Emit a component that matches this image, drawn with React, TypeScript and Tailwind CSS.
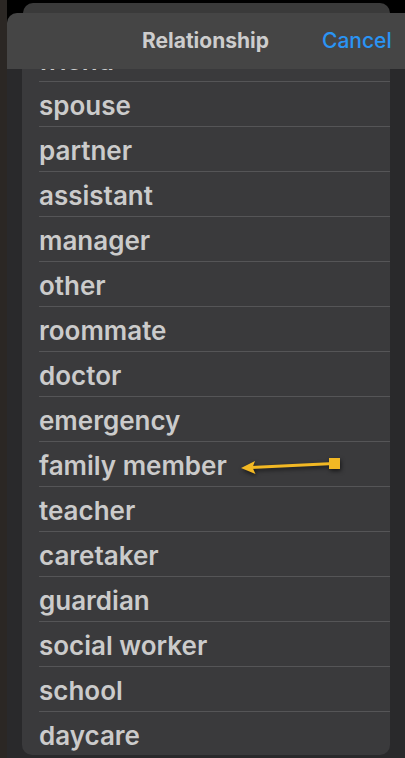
import React from 'react';

const items = [
  'friend',
  'spouse',
  'partner',
  'assistant',
  'manager',
  'other',
  'roommate',
  'doctor',
  'emergency',
  'family member',
  'teacher',
  'caretaker',
  'guardian',
  'social worker',
  'school',
  'daycare',
];

function Arrow() {
  return (
    <svg
      className="absolute left-[200px] top-[11px] drop-shadow-[1px_2px_2px_rgba(0,0,0,0.6)]"
      width="106"
      height="22"
      viewBox="0 0 106 22"
    >
      <line x1="12" y1="14.5" x2="95" y2="10.5" stroke="#f2b824" strokeWidth="3" />
      <path d="M2 15 L16 8 L13.5 14.6 L16.5 21 Z" fill="#f2b824" />
      <rect x="90" y="5" width="11" height="11" fill="#f2b824" />
    </svg>
  );
}

export default function App() {
  return (
    <div
      className="flex h-[758px] w-[405px] overflow-hidden bg-black"
      style={{ fontFamily: 'Inter, "Liberation Sans", sans-serif' }}
    >
      <div className="w-[7px] shrink-0 bg-[#2b2724]" />
      <div className="flex min-w-0 flex-1 flex-col">
        <div className="h-[13px] shrink-0 pl-[16px] pr-[15px] pt-[3px]">
          <div className="h-full rounded-t-[10px] bg-[#3a3a3a]" />
        </div>
        <div className="flex h-[56px] shrink-0 items-center rounded-tl-[10px] bg-[#454545]">
          <div className="flex-1 pl-[82px] text-center text-[21px] font-bold text-[#cdcdcd]">
            Relationship
          </div>
          <div className="w-[83px] text-[21px] font-medium text-[#2a94f4]">Cancel</div>
        </div>
        <div className="flex min-h-0 flex-1 bg-[#29292b] pb-[3px] pl-[15px] pr-[15px]">
          <div className="flex-1 overflow-hidden rounded-b-[10px] bg-[#3a3a3c]">
            <div className="-mt-[32px] pl-[17px]">
              {items.map((item, i) => (
                <div
                  key={item}
                  className={`relative flex h-[45px] items-center pt-[2px] text-[26px] font-semibold text-[#cbcbcb] ${
                    i < items.length - 1 ? 'border-b border-[#555557]' : ''
                  }`}
                >
                  {item}
                  {item === 'family member' && <Arrow />}
                </div>
              ))}
            </div>
          </div>
        </div>
      </div>
    </div>
  );
}
